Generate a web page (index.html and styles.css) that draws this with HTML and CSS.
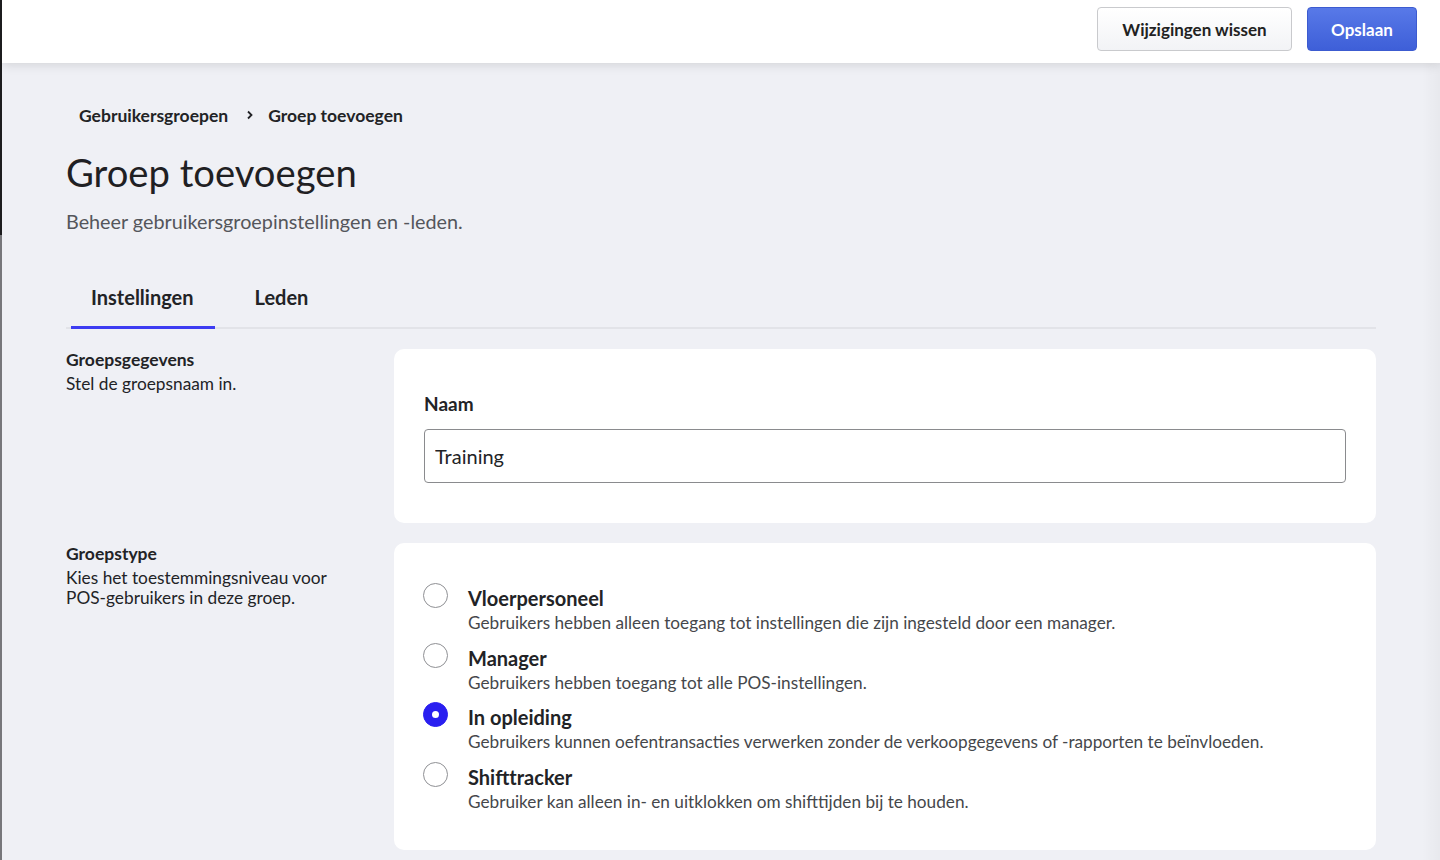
FILE: index.html
```html
<!DOCTYPE html>
<html lang="nl">
<head>
    <meta charset="UTF-8">
    <meta name="viewport" content="width=device-width, initial-scale=1.0">
    <title>Groep toevoegen</title>
    <link rel="stylesheet" href="styles.css">
</head>
<body>

    <header class="topbar">
        <button class="btn btn-secondary">Wijzigingen wissen</button>
        <button class="btn btn-primary">Opslaan</button>
    </header>

    <main class="page">
        <nav class="breadcrumb">
            <span>Gebruikersgroepen</span>
            <svg class="crumb-sep" width="8" height="10" viewBox="0 0 8 10"><path d="M2 1.5 L5.5 5 L2 8.5" fill="none" stroke="#222326" stroke-width="1.8"/></svg>
            <span>Groep toevoegen</span>
        </nav>

        <h1 class="page-title">Groep toevoegen</h1>
        <p class="page-sub">Beheer gebruikersgroepinstellingen en -leden.</p>

        <div class="tabs">
            <div class="tab tab-active">Instellingen</div>
            <div class="tab">Leden</div>
        </div>

        <section class="form-row">
            <div class="form-info">
                <div class="info-title">Groepsgegevens</div>
                <div class="info-text">Stel de groepsnaam in.</div>
            </div>
            <div class="card card-name">
                <label class="field-label" for="group-name">Naam</label>
                <input id="group-name" class="text-input" type="text" value="Training">
            </div>
        </section>

        <section class="form-row">
            <div class="form-info">
                <div class="info-title">Groepstype</div>
                <div class="info-text">Kies het toestemmingsniveau voor<br>POS-gebruikers in deze groep.</div>
            </div>
            <div class="card card-type">
                <div class="radio-item">
                    <span class="radio"></span>
                    <div>
                        <div class="radio-title">Vloerpersoneel</div>
                        <div class="radio-desc">Gebruikers hebben alleen toegang tot instellingen die zijn ingesteld door een manager.</div>
                    </div>
                </div>
                <div class="radio-item">
                    <span class="radio"></span>
                    <div>
                        <div class="radio-title">Manager</div>
                        <div class="radio-desc">Gebruikers hebben toegang tot alle POS-instellingen.</div>
                    </div>
                </div>
                <div class="radio-item">
                    <span class="radio radio-checked"></span>
                    <div>
                        <div class="radio-title">In opleiding</div>
                        <div class="radio-desc">Gebruikers kunnen oefentransacties verwerken zonder de verkoopgegevens of -rapporten te beïnvloeden.</div>
                    </div>
                </div>
                <div class="radio-item">
                    <span class="radio"></span>
                    <div>
                        <div class="radio-title">Shifttracker</div>
                        <div class="radio-desc">Gebruiker kan alleen in- en uitklokken om shifttijden bij te houden.</div>
                    </div>
                </div>
            </div>
        </section>
    </main>

</body>
</html>
```

FILE: styles.css
```css
html {
    background:
        linear-gradient(#1c1c1e, #1c1c1e) 0 0 / 2px 235px no-repeat,
        linear-gradient(#77777b, #77777b) 0 235px / 2px 100% no-repeat,
        #eff0f5;
}
body {
    font-family: Lato, "Noto Sans", Arial, sans-serif;
    color: #222326;
    margin: 0 0 0 2px;
    min-height: 100vh;
    background: linear-gradient(to right, rgba(0, 0, 0, 0) 1420px, rgba(0, 0, 0, 0.03) 1438px);
}
.topbar {
    height: 63px;
    background-color: #fff;
    display: flex;
    justify-content: flex-end;
    align-items: center;
    gap: 15px;
    padding: 0 23px 0 0;
    box-shadow: 0 2px 10px rgba(0, 0, 0, 0.12);
    position: relative;
}
.btn {
    font-family: inherit;
    font-size: 17px;
    font-weight: 700;
    height: 44px;
    border-radius: 4px;
    cursor: pointer;
    margin-top: -5px;
}
.btn-secondary {
    width: 195px;
    color: #222;
    background: linear-gradient(#ffffff, #f2f3f6);
    border: 1px solid #c9cacd;
}
.btn-primary {
    width: 110px;
    color: #fff;
    background: linear-gradient(#5879e8, #3e5fd8);
    border: 1px solid #3c5bd0;
}
.page {
    padding: 0 64px 0 64px;
}
.breadcrumb {
    display: flex;
    align-items: center;
    font-size: 17.5px;
    font-weight: 700;
    line-height: 24px;
    padding: 41px 0 0 13px;
}
.crumb-sep {
    margin: -2px 14px 0 18px;
}
.page-title {
    font-size: 38.2px;
    font-weight: 400;
    line-height: 46px;
    margin: 21px 0 0 0;
    color: #1f2023;
}
.page-sub {
    font-size: 19.8px;
    line-height: 28px;
    color: #54565b;
    margin: 12px 0 0 0;
}
.tabs {
    display: flex;
    gap: 20px;
    margin-top: 50px;
    border-bottom: 2px solid #e2e3e8;
    padding-left: 5px;
}
.tab {
    font-size: 20px;
    font-weight: 700;
    line-height: 24px;
    padding: 0 20px 17px 20px;
    border-bottom: 3px solid transparent;
    margin-bottom: -2px;
}
.tab-active {
    border-bottom-color: #3d3cf2;
    padding-right: 21px;
}
.form-row {
    display: grid;
    grid-template-columns: 328px 1fr;
    margin-top: 20px;
}
.info-title {
    font-size: 17.5px;
    font-weight: 700;
    line-height: 22px;
}
.info-text {
    font-size: 17.3px;
    line-height: 20px;
    margin-top: 3px;
}
.card {
    background-color: #fff;
    border-radius: 10px;
    padding: 0 30px;
}
.card-name {
    padding-top: 43px;
    padding-bottom: 40px;
}
.field-label {
    display: block;
    font-size: 19px;
    font-weight: 700;
    line-height: 24px;
    margin-bottom: 13px;
}
.text-input {
    display: block;
    box-sizing: border-box;
    width: 100%;
    height: 54px;
    border: 1px solid #8a8b8e;
    border-radius: 4px;
    padding: 0 10px;
    font-family: inherit;
    font-size: 20px;
    color: #222326;
}
.card-type {
    padding-top: 42px;
    padding-bottom: 36px;
}
.radio-item {
    display: flex;
    gap: 20px;
}
.radio-item + .radio-item {
    margin-top: 9.5px;
}
.radio {
    flex: none;
    width: 25px;
    height: 25px;
    box-sizing: border-box;
    border: 1px solid #8f9094;
    border-radius: 50%;
    margin: -2px 0 0 -1px;
    position: relative;
}
.radio-checked {
    background-color: #2a1ff0;
    border-color: #2a1ff0;
}
.radio-checked::after {
    content: "";
    position: absolute;
    left: 8px;
    top: 8px;
    width: 7px;
    height: 7px;
    border-radius: 50%;
    background-color: #fff;
}
.radio-title {
    font-size: 20px;
    font-weight: 700;
    line-height: 26px;
}
.radio-desc {
    font-size: 17.2px;
    line-height: 24px;
    color: #45474b;
}
```
